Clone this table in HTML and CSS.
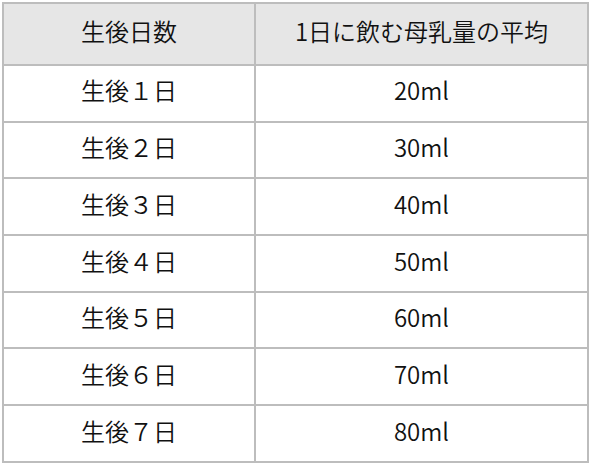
FILE: index.html
```html
<!DOCTYPE html>
<html lang="ja">
<head>
<meta charset="utf-8">
<link rel="stylesheet" href="styles.css">
</head>
<body>
<table class="milk">
  <thead>
    <tr class="head"><th class="c1">生後日数</th><th class="c2">1日に飲む母乳量の平均</th></tr>
  </thead>
  <tbody>
    <tr><td>生後１日</td><td>20ml</td></tr>
    <tr><td>生後２日</td><td>30ml</td></tr>
    <tr><td>生後３日</td><td>40ml</td></tr>
    <tr><td>生後４日</td><td>50ml</td></tr>
    <tr><td>生後５日</td><td>60ml</td></tr>
    <tr><td>生後６日</td><td>70ml</td></tr>
    <tr><td>生後７日</td><td>80ml</td></tr>
  </tbody>
</table>
</body>
</html>
```
FILE: styles.css
```css
html, body {
  margin: 0;
  padding: 0;
  background: #ffffff;
}
body {
  padding: 2px 0 0 2px;
  font-family: "Noto Sans CJK JP", "Noto Sans", sans-serif;
  color: #111111;
}
.milk {
  border-collapse: collapse;
  width: 587px;
  table-layout: fixed;
}
.milk th, .milk td {
  border: 2px solid #bdbdbd;
  text-align: center;
  vertical-align: middle;
  font-size: 24px;
  font-weight: 350;
  padding: 0 0 5px 0;
  line-height: 1.2;
}
.milk .c1 { width: 250px; }
.head th {
  background: #e6e6e6;
  height: 55px;
}
.milk tbody td {
  height: 49.7px;
}
```
